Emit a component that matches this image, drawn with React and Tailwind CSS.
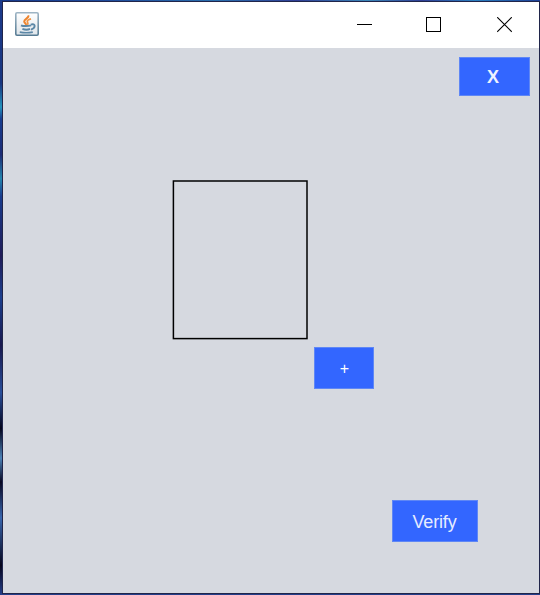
import React from "react";

function JavaIcon() {
  return (
    <svg className="h-6 w-6" viewBox="0 0 24 24" fill="none">
      <defs>
        <linearGradient id="tile" x1="0" y1="0" x2="0" y2="1">
          <stop offset="0" stopColor="#ffffff" />
          <stop offset="1" stopColor="#dfe5ea" />
        </linearGradient>
        <linearGradient id="tileEdge" x1="0" y1="0" x2="0" y2="1">
          <stop offset="0" stopColor="#9db4c4" />
          <stop offset="1" stopColor="#567b93" />
        </linearGradient>
      </defs>
      <rect x="0.8" y="0.8" width="22.4" height="22.4" rx="1.2" fill="url(#tile)" stroke="url(#tileEdge)" strokeWidth="1.6" />
      <path d="M13.2 3.4c1.4 2.6-4.2 3.4-4 6 .1 1.3 1.6 2.2 2.2 3.6" stroke="#ee852f" strokeWidth="2" />
      <path d="M16 6.8c-2.6.8-4.2 1.8-3.6 3.1.4 1 .9 1.6.1 3" stroke="#ef9446" strokeWidth="1.8" />
      <path d="M6 13.3c2 1 7.6 1 10 0" stroke="#5c87a6" strokeWidth="1.9" />
      <path d="M7.4 16.9c2.4.9 5.6.9 7.6 0" stroke="#5c87a6" strokeWidth="2" />
      <path d="M4.8 20.2c3.6.6 9.4.6 13-.1" stroke="#5c87a6" strokeWidth="1.7" />
      <path d="M15.8 12.6c5-1.6 5.2 3.4.2 5" stroke="#5c87a6" strokeWidth="1.9" />
    </svg>
  );
}

function TitleBar() {
  return (
    <header className="flex h-[46px] shrink-0 items-start justify-between bg-white pt-[10px] pr-[27px] pl-3">
      <JavaIcon />
      <div className="mt-[5px] flex gap-[54px]">
        <svg className="h-4 w-[15px]" viewBox="0 0 15 16" shapeRendering="crispEdges">
          <path d="M0 7.5h15" stroke="#000" />
        </svg>
        <svg className="h-4 w-[15px]" viewBox="0 0 15 16" fill="none" shapeRendering="crispEdges">
          <rect x="0.5" y="0.5" width="14" height="14" stroke="#000" />
        </svg>
        <svg className="ml-[2px] h-4 w-[15px]" viewBox="0 0 15 16">
          <path d="M0.2 0.2l14.6 14.6M14.8 0.2L0.2 14.8" stroke="#000" strokeWidth="1.1" />
        </svg>
      </div>
    </header>
  );
}

const buttonBase =
  "flex shrink-0 items-center justify-center border border-[#5f87f5] bg-[#3366ff] leading-none";

export default function App() {
  return (
    <div className="h-[595px] w-[540px] bg-[linear-gradient(to_bottom,#1d3a8c_0%,#17357f_14%,#2493bd_18%,#173d90_20%,#1c2c75_26%,#2485ae_30%,#193c8e_33%,#201c58_43%,#1c3f8e_50%,#18184e_58%,#294f9b_66%,#03041c_72%,#4c82b7_77%,#080722_81%,#3866ae_87%,#06051c_95%,#253f8c_100%)] font-['Liberation_Sans',Arial,sans-serif]">
      <div className="h-px bg-[linear-gradient(to_right,#173a8c,#1f4c9c_20%,#2a6fae_40%,#2f3f96_55%,#3a86b8_68%,#2f3f96_78%,#2a7fc0_88%,#1c3f96)]" />
      <div className="pt-px pr-px pb-[2px] pl-[3px]">
        <div className="flex h-[591px] flex-col bg-[#d6d9e0] shadow-[0_0_0_1px_#20254a]">
          <TitleBar />
          <main className="flex flex-1 flex-col items-start">
            <button className={`${buttonBase} mt-[9px] ml-[456px] h-[39px] w-[71px] pt-px pr-[3px] text-[18px] font-bold text-[#eef2ff]`}>
              X
            </button>
            <svg className="mt-[84px] ml-[169px] h-[160px] w-[136px] shrink-0" viewBox="0 0 136 160" fill="none">
              <rect x="1.4" y="1" width="133.6" height="157.6" stroke="#000" strokeWidth="1.5" />
            </svg>
            <button className={`${buttonBase} mt-[7px] ml-[311px] h-[42px] w-[60px] pt-px pl-px text-[16px] text-white`}>
              +
            </button>
            <button className={`${buttonBase} mt-[111px] ml-[389px] h-[42px] w-[86px] pt-px pr-px text-[18px] tracking-[-0.15px] text-[#e6ecff]`}>
              Verify
            </button>
          </main>
        </div>
      </div>
    </div>
  );
}
